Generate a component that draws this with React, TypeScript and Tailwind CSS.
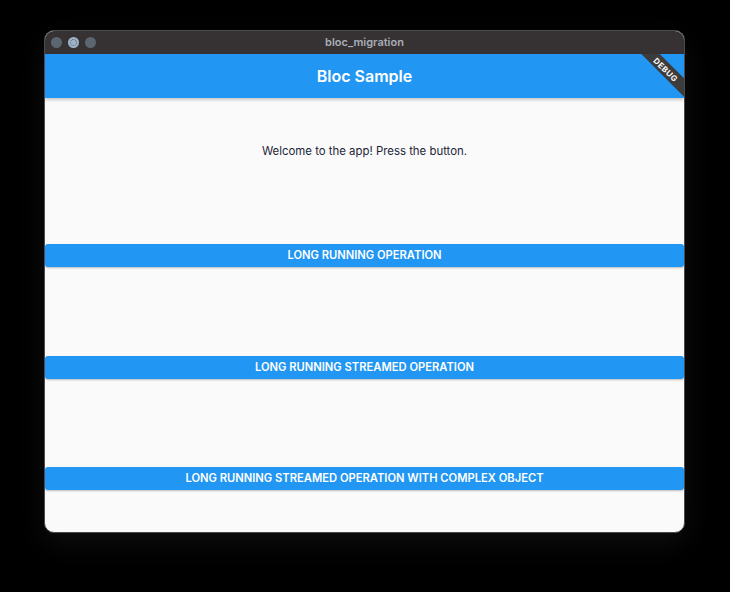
export default function App() {
  const buttons = [
    { label: "LONG RUNNING OPERATION", mt: "mt-[85px]" },
    { label: "LONG RUNNING STREAMED OPERATION", mt: "mt-[89px]" },
    { label: "LONG RUNNING STREAMED OPERATION WITH COMPLEX OBJECT", mt: "mt-[88px]" },
  ];

  return (
    <div className="w-[730px] h-[592px] bg-black pt-[30px] pl-[44px] font-['Inter',sans-serif]">
      <div className="w-[641px] h-[503px] rounded-[10px] overflow-hidden bg-[#fafafa] border border-[#4b4b4f] shadow-[0_10px_30px_rgba(255,255,255,0.06)] flex flex-col">
        {/* title bar */}
        <div className="relative h-[23px] bg-[#363234] flex items-center pl-[6px] gap-[6px] shrink-0">
          <span className="w-[11px] h-[11px] rounded-full bg-[#5c6670]" />
          <span className="w-[11px] h-[11px] rounded-full bg-[#9fb3c8] flex items-center justify-center">
            <span className="w-[7px] h-[7px] rounded-full border border-dotted border-[#5c6670]" />
          </span>
          <span className="w-[11px] h-[11px] rounded-full bg-[#5c6670]" />
          <div className="absolute inset-0 flex items-center justify-center text-[11px] font-semibold text-[#a9adb5]">
            bloc_migration
          </div>
        </div>

        {/* app bar */}
        <div className="relative h-[44px] bg-[#2196f3] flex items-center justify-center shrink-0 shadow-[0_2px_3px_rgba(0,0,0,0.2)] z-10 overflow-hidden">
          <span className="text-white text-[16px] font-semibold">Bloc Sample</span>
          <div className="absolute top-[9px] right-[-22px] w-[80px] h-[13px] rotate-45 bg-[#3c3c3c] flex items-center justify-center">
            <span className="text-white text-[8px] font-bold tracking-[0.5px]">DEBUG</span>
          </div>
        </div>

        {/* body */}
        <div className="flex flex-col items-center pt-[45px]">
          <p className="text-[11.4px] leading-[16px] text-[#1c2638]">Welcome to the app! Press the button.</p>
          {buttons.map((b) => (
            <button
              key={b.label}
              type="button"
              className={`${b.mt} w-full h-[23px] rounded-[3px] bg-[#2196f3] text-white text-[11.2px] font-semibold shadow-[0_1px_2px_rgba(0,0,0,0.25)]`}
            >
              {b.label}
            </button>
          ))}
        </div>
      </div>
    </div>
  );
}
